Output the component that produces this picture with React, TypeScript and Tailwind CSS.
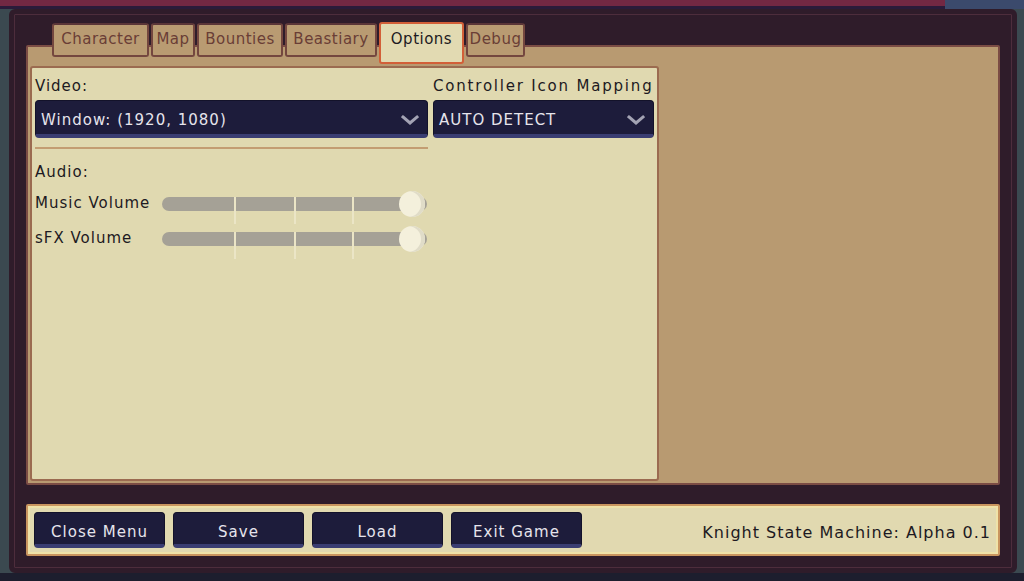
import React from 'react';

const font = { fontFamily: '"DejaVu Sans", "Liberation Sans", sans-serif' };

const tabs = [
  { label: 'Character', w: 'w-[97px]' },
  { label: 'Map', w: 'w-[44px]' },
  { label: 'Bounties', w: 'w-[86px]' },
  { label: 'Beastiary', w: 'w-[92px]' },
  { label: 'Options', w: 'w-[85px]', active: true },
  { label: 'Debug', w: 'w-[59px]' },
];

const Chevron = () => (
  <svg width="18" height="12" viewBox="0 0 18 12" className="shrink-0">
    <path d="M2 3 L9 9 L16 3" fill="none" stroke="#a3a3b4" strokeWidth="3" strokeLinecap="square" />
  </svg>
);

const Dropdown: React.FC<{ value: string; className: string }> = ({ value, className }) => (
  <div
    className={`${className} h-[38px] flex items-center justify-between pl-[5px] pr-[8px] pt-[5px] bg-[#1d1c3b] rounded-[4px] border border-[#13122a] border-b-[4px] border-b-[#3a3d72] text-[#e6e4ec] text-[15px] tracking-[1px]`}
  >
    <span>{value}</span>
    <Chevron />
  </div>
);

const Slider: React.FC<{ label: string }> = ({ label }) => (
  <div className="flex items-center h-[35px]">
    <span className="w-[127px] text-[15px] tracking-[1px] text-[#1d1a22]">{label}</span>
    <div className="relative w-[265px] h-[14px] rounded-full bg-[#a5a196]">
      {[72, 132, 190].map((x) => (
        <div key={x} className="absolute top-0 h-[27px] w-[2px] bg-[#ebe5c6]" style={{ left: x }} />
      ))}
      <div className="absolute right-[2px] top-[-6px] w-[26px] h-[26px] rounded-full bg-[#f4f0dc] shadow-[inset_-4px_0_0_#e0dcc8]" />
    </div>
  </div>
);

const Button: React.FC<{ label: string }> = ({ label }) => (
  <div className="w-[131px] h-[36px] flex items-center justify-center pt-[8px] bg-[#1d1c3b] rounded-[4px] border border-[#13122a] border-b-[4px] border-b-[#3a3d72] text-[#e6e4ec] text-[15px] tracking-[1px]">
    {label}
  </div>
);

export default function App() {
  return (
    <div className="w-[1024px] h-[581px] bg-[#3b4950] flex flex-col overflow-hidden" style={font}>
      <div className="h-[9px] flex shrink-0">
        <div className="w-[945px] bg-[#722843] border-b-[3px] border-[#2a1b3a]" />
        <div className="flex-1 bg-[#3b4a6c]" />
      </div>
      <div className="flex-1 flex">
        <div className="w-[9px]" />
        <div className="w-[1008px] h-[564px] bg-[#2f1c2a] rounded-[6px] border-[5px] border-[#2f1c2a] shadow-[inset_0_0_0_1px_#4d2d3c] flex flex-col px-[12px] pt-[9px]">
          <div className="relative z-10 flex gap-[2px] pl-[26px] h-[34px]">
            {tabs.map((t) =>
              t.active ? (
                <div
                  key={t.label}
                  className={`${t.w} h-[42px] -mt-[1px] flex items-start justify-center pt-[4px] bg-[#e2dab2] border-[2px] border-[#d25f38] rounded-[3px] text-[#1d1a22] text-[15px] tracking-[0.5px]`}
                >
                  {t.label}
                </div>
              ) : (
                <div
                  key={t.label}
                  className={`${t.w} h-[34px] flex items-start justify-center pt-[3px] bg-[#b99b72] border-[2px] border-[#74473f] border-t-[#5a3538] rounded-[3px] text-[#6a3e36] text-[15px] tracking-[0.5px]`}
                >
                  {t.label}
                </div>
              )
            )}
          </div>
          <div className="-mt-[12px] h-[440px] bg-[#b89a71] border-[2px] border-[#7b4c44] rounded-[2px] pl-[2px] pt-[19px]">
            <div className="w-[629px] h-[415px] bg-[#e0d9b0] border-[2px] border-[#9b6b50] rounded-[3px] pl-[3px] pt-[4px] flex flex-col text-[#1d1a22]">
              <div className="flex gap-[5px]">
                <div className="flex flex-col">
                  <div className="h-[28px] flex items-center text-[15px] tracking-[1px]">Video:</div>
                  <Dropdown value="Window: (1920, 1080)" className="w-[393px]" />
                  <div className="w-[393px] h-[2px] bg-[#c39d72] mt-[9px]" />
                </div>
                <div className="flex flex-col">
                  <div className="h-[28px] flex items-center text-[15px] tracking-[1.8px] whitespace-nowrap">Controller Icon Mapping</div>
                  <Dropdown value="AUTO DETECT" className="w-[221px]" />
                </div>
              </div>
              <div className="h-[24px] mt-[11px] flex items-center text-[15px] tracking-[1px]">Audio:</div>
              <div className="mt-[2px] flex flex-col">
                <Slider label="Music Volume" />
                <Slider label="sFX Volume" />
              </div>
            </div>
          </div>
          <div className="mt-[19px] h-[52px] bg-[#e1d9b0] border-[2px] border-[#c9955f] rounded-[2px] shadow-[inset_0_0_0_2px_#efe2a8] flex items-center pl-[6px] pr-[7px] gap-[8px]">
            <Button label="Close Menu" />
            <Button label="Save" />
            <Button label="Load" />
            <Button label="Exit Game" />
            <div className="flex-1 pt-[6px] text-right text-[16px] tracking-[1px] text-[#1d1a22]">Knight State Machine: Alpha 0.1</div>
          </div>
        </div>
        <div className="flex-1" />
      </div>
      <div className="h-[8px] bg-[#1d1e2e] shrink-0" />
    </div>
  );
}
